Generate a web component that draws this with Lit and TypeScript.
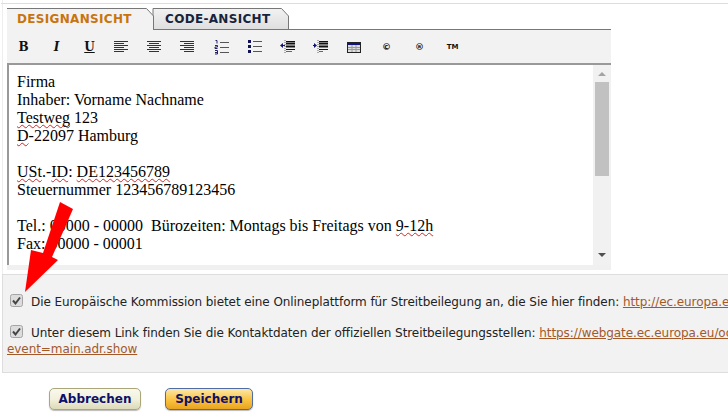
import { LitElement, html, css, svg } from "lit";
import { customElement } from "lit/decorators.js";

const line = (y: number, x1: number, x2: number, c = "#333", w = 1) =>
  svg`<path d="M${x1} ${y + 0.5}H${x2}" stroke="${c}" stroke-width="${w}"/>`;
const align = (xs: [number, number][]) =>
  html`<svg width="16" height="16" viewBox="0 0 16 16">${xs.map(([a, b], i) => line(2 + i * 2, a, b))}</svg>`;
const L: [number, number][] = [[1,15],[1,11],[1,15],[1,11],[1,15],[1,11]];
const C: [number, number][] = [[1,15],[3,13],[1,15],[3,13],[1,15],[3,13]];
const R: [number, number][] = [[1,15],[5,15],[1,15],[5,15],[1,15],[5,15]];

const ol = html`<svg width="16" height="16" viewBox="0 0 16 16">
  <path d="M1.5 1.5h1.5v3M1 6.500h2.500v1.500H1v1.500h2.500M1 11.500h2.500v3.500H1M1 13.500h2" fill="none" stroke="#226" stroke-width="1"/>
  ${line(3, 6, 15, "#555")}${line(8, 6, 15, "#555")}${line(13, 6, 15, "#555")}</svg>`;
const ul = html`<svg width="16" height="16" viewBox="0 0 16 16">
  <rect x="1" y="1" width="3" height="3" fill="#115"/><rect x="1" y="6" width="3" height="3" fill="#115"/><rect x="1" y="11" width="3" height="3" fill="#115"/>
  ${line(2, 6, 15, "#555")}${line(7, 6, 15, "#555")}${line(12, 6, 15, "#555")}</svg>`;
const outdent = html`<svg width="16" height="16" viewBox="0 0 16 16">
  ${line(2, 6, 15, "#111")}${line(4, 6, 15, "#111", 2)}${line(7, 6, 15, "#111", 2)}${line(10, 6, 15, "#111")}${line(12, 6, 12, "#666")}
  <path d="M5 1v14" stroke="#666" stroke-dasharray="1 1"/><path d="M0 6.500L3 4v5z" fill="#117"/><path d="M2 6.500h3" stroke="#117"/></svg>`;
const indent = html`<svg width="16" height="16" viewBox="0 0 16 16">
  ${line(2, 6, 15, "#111")}${line(4, 6, 15, "#111", 2)}${line(7, 6, 15, "#111", 2)}${line(10, 6, 15, "#111")}${line(12, 6, 10, "#666")}
  <path d="M5 1v14" stroke="#666" stroke-dasharray="1 1"/><path d="M4 6.500L1 4v5z" fill="#117"/><path d="M0 6.500h2" stroke="#117"/></svg>`;
const table = html`<svg width="14" height="11" viewBox="0 0 14 11">
  <rect x=".5" y=".5" width="13" height="10" fill="#ddd" stroke="#222"/><rect x="1" y="1" width="12" height="2" fill="#118"/>
  <path d="M1 5.500h12M1 7.500h12M5 3v7M9 3v7" stroke="#999"/></svg>`;
const check = html`<svg class="cb" width="13" height="13" viewBox="0 0 13 13">
  <rect x=".5" y=".5" width="12" height="12" rx="2" fill="#dcdcdc" stroke="#a5a5a5"/>
  <path d="M3 6.500L5.500 9.500L10 3.500" fill="none" stroke="#444" stroke-width="2"/></svg>`;

@customElement("app-root")
export class AppRoot extends LitElement {
  static styles = css`
    :host { display: block; width: 728px; height: 417px; overflow: hidden; position: relative; background: #fff; font-family: "DejaVu Sans", Verdana, sans-serif; }
    .top { height: 274px; padding: 3px 0 0 2px; box-sizing: border-box; border-left: 1px solid #eee; margin-left: 2px; display: flex; flex-direction: column; }
    .topline { border-top: 1px solid #ddd; margin: 0 0 0 -4px; height: 4px; }
    .wrap { width: 604px; margin-left: 2px; display: flex; flex-direction: column; }
    .tabs { height: 22px; display: flex; position: relative; border-bottom: 0; }
    .tabbg { position: absolute; left: 0; top: 0; }
    .tab { font: bold 12px/23px "DejaVu Sans", Verdana, sans-serif; letter-spacing: .32px; white-space: nowrap; position: relative; }
    .tab.on { width: 146px; color: #c8740f; padding-left: 10px; box-sizing: border-box; }
    .tab.off { color: #17233d; padding-left: 12px; }
    .bar { height: 33px; background: #f2f2f2; display: flex; align-items: center; box-sizing: border-box; padding-top: 1px; }
    .b { width: 33px; display: flex; justify-content: center; align-items: center; height: 16px; flex: none; font: bold 12px "DejaVu Serif", serif; color: #111; }
    .b.i { font-style: italic; }
    .b.u { text-decoration: underline; }
    .b.al svg { margin-right: 3px; }
    .b.sym { font: bold 9px "DejaVu Sans", sans-serif; }
    .b.tm { font: bold 7px "DejaVu Sans", sans-serif; }
    .ed { height: 205px; display: flex; align-items: flex-start; border-top: 2px solid #999; background: #f0f0f0; box-sizing: content-box; }
    .area { flex: 1; background: #fff; border-left: 2px solid #999; padding: 8px 0 0 8px; box-sizing: border-box; font: 16px/18px "Liberation Serif", "Times New Roman", serif; color: #000; white-space: pre; overflow: hidden; height: 200px; }
    .sq { text-decoration: underline wavy #d22 1px; text-underline-offset: 1px; text-decoration-skip-ink: none; }
    .sb { width: 18px; background: #f1f1f1; display: flex; flex-direction: column; align-items: center; height: 200px; padding-top: 7px; box-sizing: border-box; }
    .tri-u { width: 0; height: 0; border: 4px solid transparent; border-top: 0; border-bottom: 4px solid #a3a3a3; }
    .thumb { width: 14px; height: 94px; background: #c1c1c1; margin-top: 6px; }
    .sbfill { flex: 1; }
    .tri-d { width: 0; height: 0; border: 4px solid transparent; border-bottom: 0; border-top: 4px solid #505050; margin-bottom: 8px; }
    .panel { height: 99px; box-sizing: border-box; background: #f2f2f2; border-top: 1px solid #ddd; border-bottom: 1px solid #ddd; border-left: 1px solid #ddd; margin-left: 2px; padding: 19px 0 0 4px; font-size: 12px; line-height: 16px; letter-spacing: -0.075px; color: #222; width: 760px; }
    .row { white-space: nowrap; }
    .row + .row { margin-top: 15px; }
    .cb { margin: 0 8px 0 3px; vertical-align: -1px; }
    a { color: #a2592a; text-decoration: underline; }
    .btns { display: flex; gap: 24px; padding: 15px 0 0 49px; }
    .btn { height: 22px; box-sizing: border-box; border-radius: 5px; font: bold 12px/20px "DejaVu Sans", Verdana, sans-serif; color: #0f0f6a; text-align: center; box-shadow: 0 1px 1px #bbb; }
    .cancel { width: 92px; border: 1px solid #a9a77a; background: linear-gradient(#f8f8ef, #f2f1dc 50%, #dcdab8); }
    .save { width: 88px; border: 1px solid #4f6da4; background: linear-gradient(#fce7a8, #fbc23f 55%, #e8a420); }
    .arrow { position: absolute; left: 24px; top: 200px; }
  `;
  render() {
    return html`
      <div class="top">
        <div class="topline"></div>
        <div class="wrap">
          <div class="tabs">
            <svg class="tabbg" width="604" height="22" viewBox="0 0 604 22">
              <defs><linearGradient id="g" x1="0" y1="0" x2="0" y2="1"><stop offset="0" stop-color="#f2f2f2"/><stop offset="1" stop-color="#dedede"/></linearGradient></defs>
              <path d="M146 .5H274.500L281.500 8V21.500H146Z" fill="url(#g)" stroke="#777"/>
              <path d="M146 21.500H604" stroke="#777"/>
              <path d="M0 22V.5H139.500L146.500 8V22Z" fill="#f2f2f2"/>
              <path d="M0 .5H139.500L146.500 8V22" fill="none" stroke="#777"/>
            </svg>
            <div class="tab on">DESIGNANSICHT</div>
            <div class="tab off">CODE-ANSICHT</div>
          </div>
          <div class="bar">
            <span class="b">B</span><span class="b i">I</span><span class="b u">U</span>
            <span class="b al">${align(L)}</span><span class="b al">${align(C)}</span><span class="b al">${align(R)}</span>
            <span class="b">${ol}</span><span class="b">${ul}</span><span class="b">${outdent}</span><span class="b">${indent}</span>
            <span class="b">${table}</span><span class="b sym">©</span><span class="b sym">®</span><span class="b tm">TM</span>
          </div>
          <div class="ed">
            <div class="area">Firma
Inhaber: Vorname Nachname
<span class="sq">Testweg</span> 123
<span class="sq">D</span>-22097 Hamburg

<span class="sq">USt</span>.-<span class="sq">ID</span>: <span class="sq">DE123456789</span>
Steuernummer 123456789123456

Tel.: 00000 - 00000  Bürozeiten: Montags bis Freitags von <span class="sq">9-12h</span>
Fax: 00000 - 00001</div>
            <div class="sb"><div class="tri-u"></div><div class="thumb"></div><div class="sbfill"></div><div class="tri-d"></div></div>
          </div>
        </div>
      </div>
      <div class="panel">
        <div class="row">${check}Die Europäische Kommission bietet eine Onlineplattform für Streitbeilegung an, die Sie hier finden: <a>http://ec.europa.eu/consumers/odr/</a></div>
        <div class="row">${check}Unter diesem Link finden Sie die Kontaktdaten der offiziellen Streitbeilegungsstellen: <a>https://webgate.ec.europa.eu/odr/main/?</a><br /><a>event=main.adr.show</a></div>
      </div>
      <div class="btns">
        <div class="btn cancel">Abbrechen</div>
        <div class="btn save">Speichern</div>
      </div>
      <svg class="arrow" width="52" height="96" viewBox="0 0 52 96"><path d="M36 2L49 9L28 57L34 60L1 92L7 50L19 53Z" fill="#f00"/></svg>
    `;
  }
}
